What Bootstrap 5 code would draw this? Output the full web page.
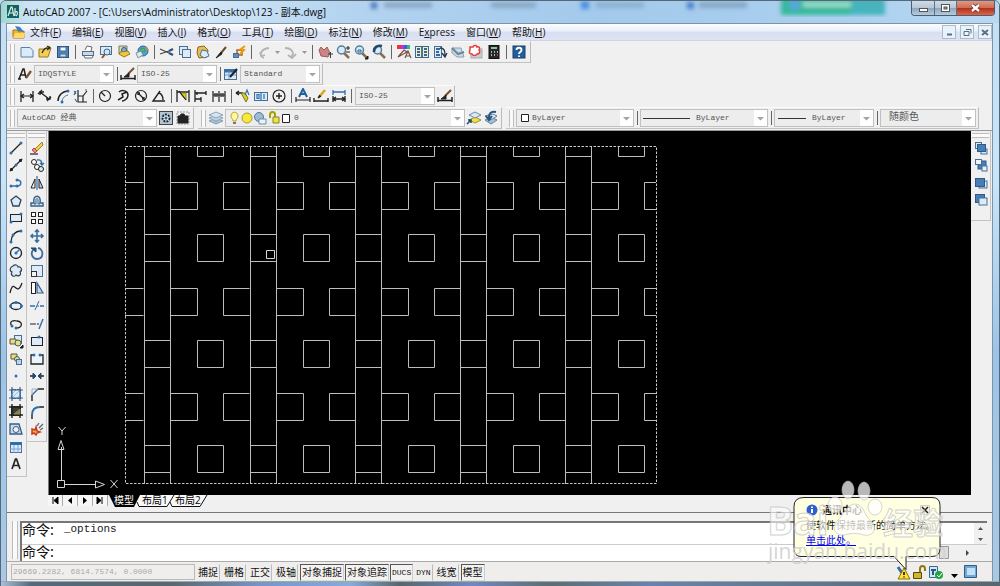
<!DOCTYPE html>
<html lang="zh-CN">
<head>
<meta charset="utf-8">
<meta name="viewport" content="width=device-width, initial-scale=1">
<title>AutoCAD 2007</title>
<link rel="stylesheet" href="https://cdn.jsdelivr.net/npm/bootstrap@5.3.0/dist/css/bootstrap.min.css">
<style>
  body { font-family: "Open Sans", "Noto Sans CJK SC", sans-serif; font-size: 10px; line-height: 12px; color: #111; background: #bcdcf3; }
  button, select, input { font: inherit; color: inherit; border-radius: 0; }
  svg { display: block; }
  .win { min-height: 100vh; border: 1px solid #566776; border-radius: 6px 6px 0 0; background: linear-gradient(#c2def4, #c7e6fb 30%, #9cc4e8 60%, #a9c9e6); }
  .titlebar { height: 22px; padding-left: 6px; background: linear-gradient(90deg, #9fd8d2, #c9e3f5 25px, #d3e8f8 200px, #b4d4f0 340px, #a3c9ec 60%, #abd0ef 85%, #b9d8f2); border-radius: 5px 5px 0 0; position: relative; }
  .titlebar h1 { font: 10px/15px "Open Sans", "Noto Sans CJK SC", sans-serif; margin: 0; color: #0b0b0b; z-index: 1; }
  .glass { position: absolute; inset: 0; width: 100%; height: 100%; }
  .winbtns { height: 15px; z-index: 1; border: 1px solid #4d5d6c; border-top: 0; border-radius: 0 0 4px 4px; overflow: hidden; margin-right: 4px; }
  .winbtns button { border: 0; padding: 0; width: 22px; background: linear-gradient(#cfdbe6, #b5c6d6 50%, #8ea6bd 52%, #b5cbde); }
  .winbtns button + button { border-left: 1px solid #5f7182; }
  .winbtns button:last-child { width: 38px; background: linear-gradient(#dc9a88, #cf6a52 50%, #b5301a 52%, #d8664a); }
  .client { margin: 0 6px 0 5px; background: #f0f0f0; border: 1px solid #7f93a5; border-width: 1px 1px 0; }
  .menubar { height: 17px; background: linear-gradient(#fcfdff, #eaeef9 45%, #d8dff1 50%, #dde3f4); border-bottom: 1px solid #cfd3e2; }
  .menubar a { color: #151515; text-decoration: none; margin-right: 11px; }
  .menubar u { text-underline-offset: 1px; }
  .mdi button { width: 14px; height: 14px; padding: 0; border: 1px solid #a9bccb; background: #e7f2fa; }
  .trow { height: 22px; }
  .trow.last-row { height: 23px; padding-bottom: 1px; }
  .tbar { gap: 2px; padding: 1px 3px; border-right: 1px solid #bbb; border-bottom: 1px solid #c2c2c2; border-top: 1px solid #fbfbfb; }
  .tbar.tight { padding-right: 1px; }
  .tbar.snug { gap: 1px; padding-right: 2px; }
  .grip { width: 5px; height: 17px; border: 1px solid #bdbdbd; border-width: 0 1px; margin-right: 2px; background: #fafafa; }
  .snug .grip { margin-right: 1px; }
  .ico { width: 16px; height: 16px; padding: 0; border: 0; background: none; flex: none; }
  .ico.drop { width: 7px; }
  .sep { width: 1px; height: 14px; background: #666; margin: 0 2px; }
  .tight .sep, .snug .sep { margin: 0 1px 0 2px; }
  .combo { height: 18px; border: 1px solid #c0c0c0; background: #ededed; padding-left: 3px; gap: 2px; overflow: hidden; }
  .combo select { appearance: none; border: 0; padding: 0 14px 0 0; min-width: 0; flex: 1; height: 16px; outline: 0; color: #555; font: 8px/14px "Liberation Mono", "Noto Sans CJK SC", monospace;
    background: url("data:image/svg+xml,%3Csvg xmlns='http://www.w3.org/2000/svg' width='13' height='16'%3E%3Crect width='13' height='16' fill='%23fff'/%3E%3Cpath d='M3 7h7l-3.500 3.500z' fill='%23a4a4a4'/%3E%3C/svg%3E") right center no-repeat; }
  .combo .cjk { font-size: 10px; }
  .c80 { width: 80px; } .c96 { width: 96px; } .c100 { width: 100px; } .c118 { width: 118px; } .c128 { width: 128px; } .c140 { width: 140px; } .c240 { width: 240px; }
  .vbar { width: 20px; padding: 2px 1px 3px 0; border: 1px solid #c4c4c4; border-width: 0 1px 1px 0; }
  .vbar.inner { margin-right: 1px; padding-left: 1px; }
  .vbar .hgrip { height: 5px; margin-bottom: 1px; border: 1px solid #bdbdbd; border-width: 1px 0; background: #fafafa; }
  .vbar .stack { display: grid; grid-auto-rows: 1fr; justify-items: center; align-items: center; }
  .h19 { height: 334px; } .h17 { height: 299px; } .h4 { height: 70px; }
  .workspace { border-top: 1px solid #9a9a9a; }
  .canvas { background: #000; border-left: 1px solid #777; }
  .sheets { height: 13px; }
  .sheets button { border: 0; border-right: 1px solid #aaa; background: #f6f6f6; padding: 0; width: 15px; height: 11px; }
  .cmd { border-top: 1px solid #777; padding: 8px 5px 0; }
  .cmd .box { border-top: 2px solid #777; border-left: 2px solid #777; background: #fff; }
  .cmd .hist { height: 22px; border-bottom: 1px solid #ccc; }
  .cmd .prompt { height: 16px; }
  .cmd label, .cmd .said { font: 14px/12px "Noto Sans CJK SC", sans-serif; }
  .cmd .said { margin-right: 10px; }
  .cmd code { font: 11px/12px "Liberation Mono", monospace; color: #222; }
  .cmd input { border: 0; outline: 0; padding: 0; height: 14px; background: none; font-size: 11px; }
  .cmd .grip { height: 38px; width: 6px; margin-right: 2px; }
  .vscroll { width: 13px; background: #f0f0f0; }
  .status { height: 20px; border-top: 1px solid #aaa; background: #f0eeec; padding: 1px 3px 0 4px; }
  .coords { width: 184px; height: 16px; margin-right: 1px; border: 1px solid #b9b9b9; color: #aaa; font: 8px/14px "Liberation Mono", monospace; padding: 0 1px; }
  .status .mode { height: 17px; padding: 0 1px; margin-right: 2px; border: 1px solid transparent; border-right-color: #bbb; background: none; white-space: nowrap; font-size: 10px; line-height: 15px; }
  .status .mode.on { margin-right: 1px; border-color: #555 #ccc #ddd #555; background: #f3f2f0; }
  .status .mono { font: 8px/15px "Liberation Mono", monospace; }
  .balloon { position: absolute; right: 52px; bottom: 12px; width: 154px; height: 82px; z-index: 3; line-height: 15px; white-space: nowrap; }
  .balloon .shape { position: absolute; left: 0; top: 0; }
  .balloon .words { position: relative; padding: 9px 12px 0 13px; }
  .balloon a { color: #00f; }
  .wm { position: absolute; right: 46px; bottom: 12px; width: 186px; height: 98px; z-index: 4; pointer-events: none; }
</style>
</head>
<body>
<div class="win d-flex flex-column position-relative">
  <header class="titlebar d-flex align-items-start">
    <svg class="glass"><defs><filter id="soft"><feGaussianBlur stdDeviation="2"/></filter></defs>
      <g filter="url(#soft)">
        <rect x="780" y="-4" width="104" height="18" fill="#35b99c"/><rect x="850" y="-4" width="34" height="18" fill="#46b3bd"/>
        <rect x="789" y="0" width="9" height="8" fill="#5fa0e6"/><rect x="802" y="1" width="48" height="5" fill="#9bdccb"/>
        <rect x="370" y="1" width="6" height="7" fill="#4d78bd"/><rect x="383" y="1" width="48" height="6" fill="#8aa9c6"/>
        <rect x="490" y="1" width="45" height="6" fill="#8aa9c6"/><rect x="580" y="0" width="8" height="8" fill="#4a8fe0"/>
        <rect x="595" y="1" width="48" height="6" fill="#8db0d0"/><rect x="686" y="1" width="7" height="7" fill="#4a80cc"/><rect x="698" y="1" width="48" height="6" fill="#86a6c5"/>
      </g></svg>
    <svg class="mt-1 me-1 position-relative" width="12" height="13" viewBox="0 0 12 13"><rect width="12" height="13" fill="#14605c"/><path d="M1 11L4 2h1l2 9M2 8h4M8 3v8M8 7c3-2 3 3 1 4" fill="none" stroke="#d6f1ea" stroke-width="1.200"/></svg>
    <h1 class="pt-1 flex-grow-1">AutoCAD 2007 - [C:\Users\Administrator\Desktop\123 - 副本.dwg]</h1>
    <div class="winbtns d-flex">
      <button aria-label="最小化"><svg width="22" height="14"><rect x="7.500" y="7.500" width="8" height="3" fill="#fff" stroke="#555"/></svg></button>
      <button aria-label="最大化"><svg width="21" height="14"><rect x="6.500" y="3.500" width="8" height="7" fill="#fff" stroke="#555"/><rect x="9" y="6" width="3" height="2" fill="#8ba0b5" stroke="#555"/></svg></button>
      <button aria-label="关闭"><svg width="37" height="14"><path d="M15 4l7 6M22 4l-7 6" stroke="#6a2a20" stroke-width="4"/><path d="M15 4l7 6M22 4l-7 6" stroke="#fff" stroke-width="2.400"/></svg></button>
    </div>
  </header>

  <main class="client flex-grow-1 d-flex flex-column">
    <nav class="menubar d-flex align-items-center">
      <svg class="mx-1" width="15" height="14" viewBox="0 0 15 14"><path d="M2 5h4l2 2 5-1v7H2z" fill="#f0b429" stroke="#a87710"/><path d="M4 1l5 1 4 5-6-1z" fill="#3b7ec4"/><path d="M2 13l2-5h10l-1 5z" fill="#ffd768"/></svg>
      <a href="#">文件(<u>F</u>)</a><a href="#">编辑(<u>E</u>)</a><a href="#">视图(<u>V</u>)</a><a href="#">插入(<u>I</u>)</a><a href="#">格式(<u>O</u>)</a><a href="#">工具(<u>T</u>)</a><a href="#">绘图(<u>D</u>)</a><a href="#">标注(<u>N</u>)</a><a href="#">修改(<u>M</u>)</a><a href="#">E<u>x</u>press</a><a href="#">窗口(<u>W</u>)</a><a href="#">帮助(<u>H</u>)</a>
      <div class="mdi d-flex gap-1 ms-auto">
        <button aria-label="最小化文档"><svg width="12" height="12"><path d="M4 8.500h5" stroke="#5c6f82" stroke-width="2"/></svg></button>
        <button aria-label="还原文档"><svg width="12" height="12"><path d="M5 3.500h5v4M3 5.500h5v4H3z" fill="none" stroke="#5c6f82"/></svg></button>
        <button aria-label="关闭文档"><svg width="12" height="12"><path d="M3 4l6 5M9 4L3 9" stroke="#5c6f82" stroke-width="2"/></svg></button>
      </div>
    </nav>

    <div class="trow d-flex"><div class="tbar d-flex align-items-center" data-icons="new open save | print preview publish web | cut copy paste brush blocked | undo drop redo drop | pan zoomrt zoomwin zoomprev | props center palette sheet markup calc | help"></div></div>
    <div class="trow d-flex">
      <div class="tbar snug d-flex align-items-center"><span class="grip"></span><i data-icon="textstyle"></i><div class="combo d-flex c80"><select aria-label="文字样式"><option>IDQSTYLE</option></select></div><span class="sep"></span><i data-icon="dimstyle"></i><div class="combo d-flex c80"><select aria-label="标注样式"><option>ISO-25</option></select></div><span class="sep"></span><i data-icon="tablestyle"></i><div class="combo d-flex c80"><select aria-label="表格样式"><option>Standard</option></select></div></div>
    </div>
    <div class="trow d-flex"><div class="tbar tight d-flex align-items-center" data-icons="dlin dali darc dord | drad djog ddia dang | quick base cont | leader tol cmark | dedit dtedit dupd |"><div class="combo d-flex c80"><select aria-label="当前标注样式"><option>ISO-25</option></select></div><i data-icon="dimstyle"></i></div></div>
    <div class="trow last-row d-flex gap-1">
      <div class="tbar snug d-flex align-items-center"><span class="grip"></span><div class="combo d-flex c140 ps-1"><select aria-label="工作空间"><option>AutoCAD 经典</option></select></div><i data-icon="gear"></i><i data-icon="mywork"></i></div>
      <div class="tbar snug d-flex align-items-center"><span class="grip"></span><i data-icon="layers"></i><div class="combo d-flex c240 align-items-center">
        <svg class="flex-shrink-0" width="63" height="14" viewBox="0 0 63 14"><path d="M4 10c0-2-2-3-2-5 0-5 7-5 7 0 0 2-2 3-2 5z" fill="#fff6a0" stroke="#b8a030"/><path d="M4 12h3" stroke="#777" stroke-width="2"/><circle cx="18" cy="7" r="5" fill="#f7e83a" stroke="#a89a30"/><circle cx="30" cy="6" r="4.500" fill="#9dbbd4" stroke="#55789a"/><path d="M30 8h7v5h-7z" fill="#eaf1f8" stroke="#6d8dab"/><path d="M41 7V4c0-4 5-4 5 0v3" fill="none" stroke="#a6a000" stroke-width="2"/><path d="M44 6h6v6h-6z" fill="#eee24a" stroke="#8b8520"/><path d="M53.500 3.500h7v8h-7z" fill="#fff" stroke="#222"/></svg>
        <select aria-label="图层"><option>0</option></select></div><i data-icon="layprev"></i><i data-icon="laystate"></i></div>
      <div class="tbar snug d-flex align-items-center"><span class="grip"></span>
        <div class="combo d-flex c118 align-items-center"><svg width="10" height="10"><path d="M1.500 1.500h7v7h-7z" fill="#fff" stroke="#222"/></svg><select aria-label="颜色"><option>ByLayer</option></select></div><span class="sep"></span>
        <div class="combo d-flex c128 align-items-center ps-0"><svg class="flex-shrink-0 me-1" width="49" height="10"><path d="M2 5.500h47" stroke="#333"/></svg><select aria-label="线型"><option>ByLayer</option></select></div><span class="sep"></span>
        <div class="combo d-flex c100 align-items-center"><svg class="flex-shrink-0 me-1" width="28" height="10"><path d="M0 5.500h28" stroke="#333"/></svg><select aria-label="线宽"><option>ByLayer</option></select></div><span class="sep"></span>
        <div class="combo d-flex c96 ps-2"><select class="cjk" aria-label="打印样式"><option>随颜色</option></select></div></div>
    </div>

    <section class="workspace d-flex flex-grow-1">
      <div class="vbar align-self-start"><div class="hgrip"></div><div class="stack h19" data-icons="line xline pline polygon rect arc circle cloud spline ellipse earc insert block point hatch gradient region table mtext"></div></div>
      <div class="vbar inner align-self-start"><div class="hgrip"></div><div class="stack h17" data-icons="erase copyobj mirror offset array move rotate scale stretch trim extend breakpt break join chamfer fillet explode"></div></div>
      <div class="flex-grow-1 d-flex flex-column">
        <div class="canvas flex-grow-1">
          <svg width="100%" height="364" aria-label="图形">
            <defs>
              <clipPath id="sheetclip"><rect x="76" y="15" width="531" height="338"/></clipPath>
              <g id="unit"><path d="M0 0H26M0 27H26M53 0h26v27h-26zM26-52H53v27H26M105-52H79v27h26"/></g>
              <g id="strip"><path d="M95.500-50V400M121.500-50V400"/><use href="#unit" x="95.500" y="-1.500"/><use href="#unit" x="95.500" y="103.500"/><use href="#unit" x="95.500" y="209.500"/><use href="#unit" x="95.500" y="314.500"/></g>
            </defs>
            <g clip-path="url(#sheetclip)" fill="none" stroke="#bdbdbd">
              <use href="#strip" x="-106"/><use href="#strip"/><use href="#strip" x="106"/><use href="#strip" x="211"/><use href="#strip" x="316"/><use href="#strip" x="421"/>
            </g>
            <rect x="76.500" y="15.500" width="531" height="337" fill="none" stroke="#c8c8c8" stroke-dasharray="2.500 1.500"/>
            <g fill="none" stroke="#d6d6d6"><path d="M217.500 119.500h8v8h-8zM8.500 349.500h7v7h-7zM12.500 349v-33M9 318.500l3-9 3 9zM16 353.500h31M46.500 350l9 3.500-9 3.500z"/><path d="M9.500 296l3.500 4 3.500-4M13 300v4M61.500 349l7 8M68.500 349l-7 8"/></g>
          </svg>
        </div>
        <div class="sheets d-flex">
          <button aria-label="首个"><svg width="14" height="11"><path d="M5 2v7M10 2L6 5.500 10 9z" stroke="#000"/></svg></button><button aria-label="上一个"><svg width="14" height="11"><path d="M9 2L5 5.500 9 9z"/></svg></button><button aria-label="下一个"><svg width="14" height="11"><path d="M5 2l4 3.500L5 9z"/></svg></button><button aria-label="末个"><svg width="14" height="11"><path d="M9 2v7M4 2l4 3.500L4 9z" stroke="#000"/></svg></button>
          <svg class="overflow-visible" width="108" height="13" font-size="10"><path d="M1 0l6 11.500h84L98 0z" fill="#f8f8f8"/><path d="M1 0l6 12h19l6-12z" fill="#000"/><path d="M29 7l2 4.500h28L66 0M62 7l2 4.500h28L99 0" fill="none" stroke="#111"/><text x="6" y="9" fill="#fff">模型</text><text x="34" y="9">布局1</text><text x="67" y="9">布局2</text></svg>
        </div>
      </div>
      <div class="vbar inner align-self-start"><div class="hgrip"></div><div class="stack h4" data-icons="front back above under"></div></div>
    </section>

    <section class="cmd mt-1 d-flex">
      <span class="grip"></span>
      <div class="box flex-grow-1">
        <div class="hist d-flex"><div class="flex-grow-1 d-flex align-items-start"><span class="said">命令:</span><code>_options</code></div>
          <div class="vscroll"><svg width="13" height="21"><path d="M4 7h5L6.500 4zM4 15h5l-2.500 3z" fill="#555"/></svg></div></div>
        <div class="prompt d-flex"><label for="cmdline">命令:</label><input id="cmdline" class="flex-grow-1"><svg width="50" height="16"><path d="M0 0h50v16H0z" fill="#f0f0f0"/><path d="M2.500 1.500h9v12h-9z" fill="#ddd" stroke="#999"/><path d="M29 5v6l3-3z" fill="#444"/></svg></div>
      </div>
    </section>

    <footer class="status d-flex align-items-center">
      <div class="coords">29669.2282, 6814.7574, 0.0000</div>
      <button class="mode">捕捉</button><button class="mode">栅格</button><button class="mode">正交</button><button class="mode">极轴</button><button class="mode on">对象捕捉</button><button class="mode on">对象追踪</button><button class="mode on mono">DUCS</button><button class="mode mono">DYN</button><button class="mode">线宽</button><button class="mode on">模型</button>
      <svg class="ms-auto me-1" width="92" height="17"><path d="M5 3l6 9" stroke="#3d6ba3" stroke-width="3"/><path d="M11 4l6 11H5z" fill="#ffe13a" stroke="#8a7400"/><path d="M11 8v3M11 12.500v1" stroke="#000" stroke-width="1.500"/><path d="M20.500 8.500h8v6h-8z" fill="#d1b429" stroke="#5b4c00"/><path d="M27 8V5c0-4 5-4 5 0v2" fill="none" stroke="#8c7a10" stroke-width="2"/><path d="M36.500 2.500h8v11h-8z" fill="#d4e8f5" stroke="#376a94"/><path d="M40 11V5M38 6h5" stroke="#235b88" stroke-width="2"/><circle cx="46" cy="11" r="4" fill="#21a445"/><path d="M44 11l2 2 3-4" stroke="#fff" fill="none"/><path d="M58 10h7l-3.500 4z"/><path d="M71.500 1.500h12v12h-12z" fill="#6fa8d4" stroke="#2e5d8c"/><path d="M74 4h8v7h-8z" fill="#c4e2f5"/></svg>
    </footer>
  </main>
  <svg class="w-100" height="6"><defs><linearGradient id="frame"><stop offset="0" stop-color="#a8c0d8"/><stop offset=".03" stop-color="#55697c"/><stop offset=".17" stop-color="#5a6770"/><stop offset=".26" stop-color="#7796c4"/><stop offset=".35" stop-color="#88abd8"/><stop offset=".4" stop-color="#56666b"/><stop offset=".47" stop-color="#7289bd"/><stop offset=".55" stop-color="#5d6d74"/><stop offset=".65" stop-color="#6983aa"/><stop offset="1" stop-color="#59666e"/></linearGradient></defs><rect width="100%" height="6" fill="url(#frame)"/><path d="M0 .5h2000" stroke="#9aa"/></svg>

  <aside class="balloon">
    <svg class="shape" width="154" height="82"><path d="M11 4.500h128q8 0 8 8v43q0 8-8 8h-26v13L101 63.500H8q-7 0-7-8v-42q0-9 10-9z" fill="#ffffe1" stroke="#222"/></svg>
    <div class="words">
      <div class="d-flex align-items-center"><svg width="12" height="12"><circle cx="6" cy="6" r="5.500" fill="#2c5fd0"/><path d="M6 5v4M6 2.500v1.500" stroke="#fff" stroke-width="2"/></svg><b class="ms-1 flex-grow-1">通讯中心</b><button class="ico" aria-label="关闭提示"><svg width="12" height="12"><path d="M1.500 1.500h9v9h-9z" fill="#f5f5df" stroke="#ccc"/><path d="M3 3l6 6M9 3L3 9" stroke="#222" stroke-width="1.500"/></svg></button></div>
      <div>使软件保持最新的简单方法。</div>
      <a href="#">单击此处。</a>
    </div>
  </aside>
  <svg class="wm" viewBox="0 0 186 98" font-family="Open Sans, Noto Sans CJK SC, sans-serif" aria-hidden="true">
    <g fill="#fff" fill-opacity=".6" stroke="#c6c6c6" stroke-opacity=".8">
      <text x="0" y="58" font-size="39" font-weight="700">Bai</text>
      <text x="116" y="57" font-size="30" font-weight="700">经验</text>
      <text x="1" y="82" font-size="21" stroke="none" fill="#d0d0d0" fill-opacity=".9">jingyan.baidu.com</text>
    </g>
    <g fill="#fff" fill-opacity=".72" stroke="#bbb" stroke-opacity=".6"><ellipse cx="81" cy="13" rx="6" ry="9"/><ellipse cx="97" cy="14" rx="6" ry="9"/><ellipse cx="68" cy="28" rx="7" ry="8"/><ellipse cx="108" cy="30" rx="7" ry="8"/><path d="M88 27c-9 0-11 12-18 17-6 6-2 15 7 14 8-2 13-2 20 0 10 2 14-8 7-14-7-5-7-17-16-17z"/></g>
  </svg>
</div>

<script>
const B = '#2f6fb0', K = '#222', P = '#dcebf7';
const s = (d, c = K, w = 1.2, f = 'none') => `<path d="${d}" fill="${f}" stroke="${c}" stroke-width="${w}"/>`;
const dots = (...p) => p.map(([x, y]) => `<circle cx="${x}" cy="${y}" r="1.500" fill="${B}"/>`).join('');
const box = (x, y, w, h, f = P, c = '#486f93') => `<rect x="${x}" y="${y}" width="${w}" height="${h}" fill="${f}" stroke="${c}"/>`;
const glass = s('M9 9l5 5', '#8a6f4d', 2.5) + '<circle cx="6.500" cy="6" r="4" fill="#d8ebf6" stroke="#587c9c" stroke-width="1.500"/>';
const icons = {
  new: s('M2 3.500h9l3 3V13H2z', '#5682a8', 1, P),
  open: s('M2 5h5l5-3 2 2-3 9H2z', '#9a7b22', 1, '#f2cf55') + s('M5 9c2-5 4-5 7-5M10 2l3 2-3 2', '#2a2a2a'),
  save: box(2.5, 2.5, 11, 11, '#4c82bd', '#27527f') + box(5, 3, 6, 4, '#eef5fb') + box(5, 10, 6, 3, '#cfdbe6'),
  print: s('M5 6l2-4 5 1-1 4', '#667', 1, '#fff') + box(2.5, 7.5, 11, 4, '#ccd7e4', '#566b86') + s('M4 12l1 2h7l1-2', '#566b86', 1, '#fff'),
  preview: box(2.5, 2.5, 11, 8) + '<circle cx="9" cy="8" r="3" fill="#cfe8f7" stroke="#3d6588"/>' + s('M7 10l-3 4', '#8a5a2d', 2),
  publish: s('M3 2h8v8H3z', '#5d7da0', 1, '#f7d96b') + '<circle cx="8" cy="6" r="2.500" fill="#79b0de" stroke="#365d83"/>' + s('M3 10l5 3 6-3-2-3-8 1z', '#9a7b22', 1, '#f0c63f'),
  web: '<circle cx="9" cy="7" r="5" fill="#4aa1d4" stroke="#2f658f"/>' + s('M7 4l4 1-1 3-3-1z', '#3b9c62', 1, '#55b878') + s('M2 9l5-2 2 4-5 3z', '#7f93a6', 1, '#dfe8ee') + s('M12 3l2 3', '#d98a2a', 2),
  cut: s('M1 5l9 4M1 10l9-3', '#444', 1.3) + s('M10 7l4-2M10 9l4 2', '#31537c', 2.5),
  copy: box(2.5, 2.5, 8, 8) + box(5.500, 5.500, 8, 8),
  paste: s('M3 3l6-1 4 4-1 7-8 1-2-5z', '#8b6422', 1, '#e6bd57') + s('M7 6l5 1 2 5-5 2-4-3z', '#4a7194', 1, P),
  brush: s('M13 3L8 9', '#6b4a2a', 2) + s('M8 8l-5 6 6-4z', K, 1, K),
  blocked: box(2.5, 9.5, 5, 4, '#5a8ec2') + s('M6 9V6h5v5H8', '#b45b1d', 1.5) + s('M14 2L10 5l3 1-4 4', '#e8a010', 2),
  undo: s('M8 14C2 11 5 5 13 4M4 8l1 4 4-1', '#b4b4b4', 1.8),
  redo: s('M2 4c7 0 10 5 6 9M5 11l4 3 4-4', '#b4b4b4', 1.8),
  drop: '<path d="M1 7h5L3.500 10z" fill="#999"/>',
  pan: s('M4 12L2 6l2-3 3 3 3-3 3 6-2 4z', '#a35858', 1, '#c98683') + s('M11 10h5M13.500 8v6', '#344', 1),
  zoomrt: glass + s('M11 4h4M13 2v4M11 8h4', K, 1),
  zoomwin: glass + s('M5 6h3v2H5z', '#27689b', 1) + s('M12 15h3v-3z', K, 1, K),
  zoomprev: glass + s('M3 8c0-5 4-7 8-6', '#24476b', 2.5),
  props: '<path d="M1 1h4v4H1z" fill="#e33"/><path d="M5 1h3v4H5z" fill="#b3d"/><path d="M8 1h3v4H8z" fill="#3a5be8"/><path d="M11 1h3v4h-3z" fill="#2cbc84"/>' + s('M2 13l6-7 3 2zM9 14l3-7 3 7M10 12h4', '#7a513c', 1.2),
  center: box(1.5, 2.5, 13, 11, '#f5efc0', '#37679a') + s('M8 2v12M3 5h3M3 8h3M3 11h3M10 5h3M10 8h3M10 11h3', '#37679a', 1.8),
  palette: box(2.5, 2.5, 7, 11) + s('M4 5h4M4 8h3M4 11h4', '#37679a', 2) + s('M8 4c5 0 5 4 5 8M10 9l3 4 2-4', '#25384c', 1.3),
  sheet: s('M2 4h9l3 9H7l-5-4z', '#8aa0ae', 1, '#c9dbe6') + s('M2 4l6 6 6-2', '#6b8799', 2),
  markup: box(3, 5, 11, 9, '#c9cdd0', '#aaa') + s('M2 3h3c1-3 4-1 4 0 3-1 3 2 2 3 2 2 0 4-2 4-1 2-4 2-5 0-3 0-3-2-2-4z', '#e33c3c', 1.5, '#fff'),
  calc: box(3, 1.500, 10, 13, '#282828', '#111') + s('M5 4h6', '#7ec89d', 2) + s('M5 8h1M8 8h1M11 8h1M5 11h1M8 11h1', '#ddd', 1.6) + s('M11 11h1', '#e44', 1.6),
  help: '<rect x="2" y="2" width="12" height="12" fill="#225f99" stroke="#18406b"/>' + s('M5.500 6c0-3 5-3 5 0 0 2-2.500 2-2.500 4M8 11.500v1.500', '#fff', 1.8),
  textstyle: s('M2 13L6 3h1l2 9M3 9h5M1 13h3', K, 1.5) + s('M14 5l-5 7', '#76502a', 2.2),
  dimstyle: s('M14 2L8 8', '#76502a', 2) + s('M9 7l-5 4 5 0z', K, 1, K) + s('M1 9v5M15 9v5M1 12.500h14', K, 1.5),
  tablestyle: box(1.5, 3.5, 12, 10) + s('M2 5h12', B, 3) + s('M6 5v8M2 9h11', '#6f98bd', 1) + s('M14 3L7 11', K, 2),
  dlin: s('M2 3v11M14 3v11', K, 1.3) + s('M2 8h12M5 6L2 8l3 2M11 6l3 2-3 2', K, 1.2),
  dali: s('M1 6l4-4M10 13l4-4', K, 1.3) + s('M3 4l9 7M3 7V4h4M9 11h4V8', K, 1.3),
  darc: s('M3 13C3 7 8 3 13 3', K, 1.5) + s('M7 14c0-3 2-6 6-7', B, 1, 'none') + dots([13, 3], [7, 14]),
  dord: s('M5 2v12h9M5 8h5v6M10 8l4-5', K, 1.2) + s('M1 3l2 3M3 3L1 7M12 2h2M2 11l2 3', B),
  drad: '<circle cx="8" cy="8" r="5.500" fill="none" stroke="#222" stroke-width="1.200"/>' + s('M8 8L4 4', K, 1.3),
  djog: s('M4 4c3-3 9-1 9 3s-4 6-6 6', K, 1.5) + s('M3 12l5-3-1-3 5-2', K, 1.5),
  ddia: '<circle cx="8" cy="8" r="5.500" fill="none" stroke="#222" stroke-width="1.200"/>' + s('M4 4l8 8M5 7V5h2M9 11h2V9', K, 1.3),
  dang: s('M14 13H2L9 3M8 5c3 1 4 4 4 7', K, 1.4),
  quick: s('M2 2v12M14 2v12M2 4h12', K, 1.3) + s('M5 5l6 7V5z', '#8f8320', 1, '#dfcf20') + s('M4 3l7 9', K, 1.2),
  base: s('M2 2v12M8 9v5M13 3v4M2 5h11M2 11h6M4 4v3', K, 1.3),
  cont: s('M2 3v11M8 3v11M14 3v11M2 7h12M4 5v4M6 5v4M10 5v4M12 5v4', K, 1.2),
  leader: s('M1 5h7M1 5l3-2M1 5l3 2', K, 1.5) + s('M6 5l5 9 2-4-3-5z', '#7d7420', 1, '#dfcf20') + s('M10 7l2-5 2 5', B, 1.2),
  tol: box(1.500, 4.500, 13, 8) + s('M8 4v9M4 6.500h2v4H4zM11 6v5', B, 1.2),
  cmark: '<circle cx="8" cy="8" r="6" fill="none" stroke="#222" stroke-width="1.200"/>' + s('M5 8h6M8 5v6', K, 1.4),
  dedit: s('M4 9l4-8 4 8M5 6h5', '#1f5f9f', 2) + s('M1 9v5M15 9v5M1 12h14', K, 1.2),
  dtedit: s('M12 2L6 9', '#dba420', 2.5) + s('M7 7l-2 3 3-2', K) + s('M1 10v4M15 10v4M1 13h14', K, 1.4),
  dupd: s('M2 2v5M14 2v5M2 4h12', B, 1.3) + s('M2 8v6M14 8v6M2 11h12M5 9l-3 2 3 2M11 9l3 2-3 2', K, 1.3),
  gear: box(1.500, 1.500, 13, 13, '#b3c6d6', '#444') + '<circle cx="8" cy="8" r="3.500" fill="#e6eff6" stroke="#222" stroke-width="2" stroke-dasharray="2 1"/><circle cx="8" cy="8" r="1.500" fill="#2d5e90"/>',
  mywork: s('M2 2h12v12H2z', '#999', 1).replace('/>', ' stroke-dasharray="2 1"/>') + s('M3 6h2l1-2h3l1 2h3v7H3z', K, 1, K),
  layers: s('M1 11l7 3 7-3-7-3z', '#8aa4bb', 1, '#a8bfd2') + s('M1 8l7 3 7-3-7-3z', '#8aa4bb', 1, '#c2d4e2') + s('M1 5l7 3 7-3-7-3z', '#8aa4bb', 1, '#d8e4ee'),
  layprev: s('M3 10l6 3 6-3-6-3z', '#9e9326', 1, '#f1df45') + s('M3 5l6 3 6-3-6-3z', '#6d8ca8', 1, '#dde8f1') + s('M1 14l4-4M2 10h3v3', '#20486e', 1.5),
  laystate: s('M2 10l6 4 6-4-6-3z', '#5f7f9b', 1, '#a9c1d4') + s('M2 6l6 4 6-4-4-2z', '#5f7f9b', 1, '#dce8f2') + s('M13 2C7 1 6 4 6 8M3 6l3 4 3-4', '#28537b', 2),
  line: s('M3 13L13 3', K, 1.3) + dots([3, 13], [13, 3]), xline: s('M3 13L13 3', K, 1.3) + s('M2 14l1-3 2 2zM14 2l-1 3-2-2z', K, 1, K) + dots([8, 8]),
  pline: s('M3 11h6c5 0 5-6 0-6', B, 1.5) + dots([3, 11], [9, 11], [9, 5]),
  polygon: s('M8 3l5 4-2 6H5L3 7z', '#345', 1.3, P), rect: box(2.500, 4.500, 11, 7, P, K) + dots([3, 12], [13, 4]),
  arc: s('M3 14C3 8 7 3 13 3', K, 1.3) + dots([3, 14], [5, 7], [13, 3]),
  circle: '<circle cx="8" cy="8" r="5.500" fill="#e8f2fa" stroke="#222" stroke-width="1.300"/>' + s('M8 8l4-4', B, 1.3) + dots([8, 8]),
  cloud: s('M5 3c2-2 5-1 5 1 3-1 5 3 2 5 2 3-2 5-4 3-2 3-6 0-4-3-3-1-2-5 1-6z', '#345', 1.2, P),
  spline: s('M2 13c2-9 4-7 6-5s4 1 6-5', K, 1.3), ellipse: '<ellipse cx="8" cy="8" rx="5.500" ry="3.500" fill="#e8f2fa" stroke="#222" stroke-width="1.300"/>' + dots([2.5, 8], [8, 4.5], [13.5, 8]),
  earc: s('M4 10c-4-5 2-6 5-5 7 1 5 7-1 7', K, 1.3) + dots([4, 10], [8, 12]),
  insert: box(6.500, 2.500, 7, 8) + s('M2 6h6v5H2z', '#555', 1, '#eedc6c') + '<circle cx="10" cy="10" r="3" fill="#f1e06d" stroke="#365d83"/>' + s('M12 15h3v-3z', K, 1, K),
  block: s('M3 3h6v5H3z', '#555', 1, '#eedc6c') + '<circle cx="9" cy="8" r="2.500" fill="#f1e06d" stroke="#365d83"/>' + box(8.500, 8.500, 5, 5, '#b9d5eb'),
  point: dots([8, 8]), hatch: box(3.500, 3.500, 9, 9, '#dceaf6', B) + s('M3 9l6-6M3 13L13 3M8 13l5-5', '#9bbad6', 1) + s('M1 4h14M1 12h14M4 1v14M12 1v14', '#3d6488', 1.2),
  gradient: box(3.500, 3.500, 9, 9, '#3d3c31', K) + s('M1 4h14M1 12h14M4 1v14M12 1v14', K, 1.4) + s('M6 11l6-5v5z', '#8c8350', 1, '#8c8350'),
  region: s('M2 3h9l3 10H2z', '#375e87', 1.3, '#c6dded') + '<circle cx="8" cy="8.500" r="3" fill="#f0f0f0" stroke="#375e87"/>',
  table: box(2.500, 3.500, 11, 10) + s('M2 4.500h12', B, 3) + s('M6 6v8M10 6v8M2 10h12', '#7da3ce', 1),
  mtext: s('M4 13L7.500 3h1L12 13M5.500 9.500h5', K, 1.7),
  erase: s('M5 10l8-8 1 3-7 7z', '#a68422', 1, '#f1cd51') + s('M3 10l2-2 3 3-2 2z', '#b34b4b', 1, '#e88') + s('M1 14h8', K),
  copyobj: '<circle cx="5" cy="5" r="2.500" fill="#fff" stroke="#222"/><circle cx="8" cy="10" r="2.500" fill="#fff" stroke="#222"/><circle cx="12" cy="12" r="2.500" fill="#dbe9f5" stroke="#222"/>' + s('M8 3c4-1 5 2 5 5M11 6l2 2 2-2', B, 1.3),
  mirror: s('M6 4v9H2z', K, 1) + s('M10 4v9h4z', K, 1, '#bcd3e7') + s('M8 1v14', B), offset: s('M2 13h12v-3h-3c2-9-8-9-6 0H2z', '#365f89', 1.4, P) + s('M5 11h2V7c0-2 2-2 2 0v4h2', '#365f89', 1),
  array: box(2.500, 2.500, 4, 4, '#fff', K) + box(9.500, 2.500, 4, 4, '#fff', K) + box(2.500, 9.500, 4, 4, '#fff', K) + box(9.500, 9.500, 4, 4, '#fff', K),
  move: s('M8 2v12M2 8h12M6 4l2-2 2 2M6 12l2 2 2-2M4 6L2 8l2 2M12 6l2 2-2 2', '#3d6da0', 1.6),
  rotate: s('M4 5c-3 4 0 9 4 9 7 0 7-10 1-11', '#3d6da0', 1.8) + s('M2 3h5v4z', '#254a70', 1, '#254a70'), scale: box(2.500, 2.500, 11, 11) + box(2.500, 8.500, 5, 5, '#f4f4f4', '#333'),
  stretch: box(2.500, 2.500, 4, 11, '#fff', K) + s('M8 3v10h6z', '#365f89', 1.2, '#c4dcef'), trim: s('M1 8h5M11 8h4', B, 1.3) + s('M6 12l4-9M8 8h2', B, 1),
  extend: s('M1 8h6M8 8h2', K, 1.2) + s('M10 13l4-10', B, 1.4), breakpt: box(2.500, 4.500, 11, 8, P, K) + dots([10, 4]),
  break: s('M5 4H2v9h12V4h-3', K, 1.3, '#edf4f9') + dots([5, 4], [11, 4]), join: s('M1 8h5M10 8h5', K, 1.3) + s('M4 5l3 3-3 3zM12 5L9 8l3 3z', '#254a70', 1, '#254a70'),
  chamfer: s('M3 15V9M9 3h6', K, 1.4) + s('M3 9l6-6', B, 1.5) + s('M3 3h6M3 3v6', '#999', .8), fillet: s('M3 15v-4M11 3h4', K, 1.4) + s('M3 11c0-5 3-8 8-8', B, 2),
  explode: s('M3 8l3 1 1-3 1 4 3 1-3 1-1 2-2-2-2 1z', '#c83a27', 1.5, '#f3b633') + s('M10 7l4-4M8 5l2-3M11 9l3-2', '#666', 1.3),
  front: box(2.500, 2.500, 6, 6) + box(8, 9, 6, 5) + box(4.500, 4.500, 8, 7, '#477fb5', '#2c5c8e'),
  back: box(5, 4, 8, 8, '#477fb5', '#2c5c8e') + box(2.500, 2.500, 6, 5, '#eef5fa') + box(9, 9, 5, 5, '#e4f0f7'),
  above: box(6, 6, 8, 7) + box(2.500, 3.500, 9, 8, '#477fb5', '#2c5c8e'), under: box(2.500, 2.500, 9, 8, '#477fb5', '#2c5c8e') + box(6, 6, 8, 7)
};
function iconButton(name) {
  if (name === '|') { const sp = document.createElement('span'); sp.className = 'sep'; return sp; }
  const b = document.createElement('button');
  const w = name === 'drop' ? 7 : 16;
  b.className = 'ico' + (name === 'drop' ? ' drop' : '');
  b.setAttribute('aria-label', name);
  b.innerHTML = `<svg width="${w}" height="16" viewBox="0 0 ${w} 16">${icons[name]}</svg>`;
  return b;
}
document.querySelectorAll('[data-icons]').forEach(bar => {
  const items = bar.dataset.icons.split(' ').map(iconButton);
  if (bar.classList.contains('tbar')) { const g = document.createElement('span'); g.className = 'grip'; items.unshift(g); }
  bar.prepend(...items);
});
document.querySelectorAll('i[data-icon]').forEach(el => el.replaceWith(iconButton(el.dataset.icon)));
</script>
<script src="https://cdn.jsdelivr.net/npm/bootstrap@5.3.0/dist/js/bootstrap.bundle.min.js"></script>
</body>
</html>
